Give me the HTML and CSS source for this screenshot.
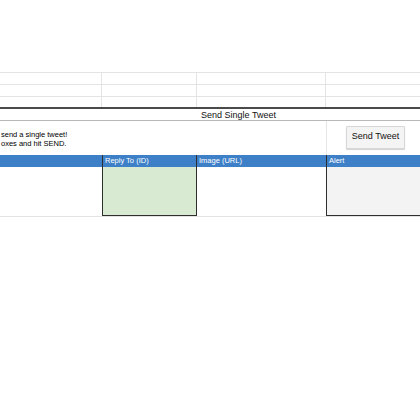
FILE: index.html
```html
<!DOCTYPE html>
<html>
<head>
<meta charset="utf-8">
<link rel="stylesheet" href="styles.css">
</head>
<body>
<div class="sheet">
  <div class="spacer"></div>
  <div class="gridrows">
    <div class="grow"><div class="c c1"></div><div class="c c2"></div><div class="c c3"></div><div class="c c4"></div></div>
    <div class="grow"><div class="c c1"></div><div class="c c2"></div><div class="c c3"></div><div class="c c4"></div></div>
    <div class="grow last"><div class="c c1"></div><div class="c c2"></div><div class="c c3"></div><div class="c c4"></div></div>
  </div>
  <div class="title">Send Single Tweet</div>
  <div class="info">
    <div class="info-text">
      <div>send a single tweet!</div>
      <div>oxes and hit SEND.</div>
    </div>
    <div class="info-action">
      <button class="send-btn">Send Tweet</button>
    </div>
  </div>
  <div class="fields">
    <div class="col col1"><div class="head"></div><div class="body"></div></div>
    <div class="col col2 box green"><div class="head">Reply To (ID)</div><div class="body"></div></div>
    <div class="col col3"><div class="head">Image (URL)</div><div class="body"></div></div>
    <div class="col col4 box grey"><div class="head">Alert</div><div class="body"></div></div>
  </div>
</div>
</body>
</html>
```
FILE: styles.css
```css
html, body {
  margin: 0;
  padding: 0;
  background: #ffffff;
}
body {
  font-family: "Liberation Sans", Arial, sans-serif;
  color: #111111;
  width: 420px;
  overflow: hidden;
}
.sheet {
  width: 420px;
}
.spacer {
  height: 72px;
}
.gridrows {
  border-top: 1px solid #e4e4e4;
}
.grow {
  display: flex;
  height: 11px;
  border-bottom: 1px solid #e4e4e4;
}
.grow.last {
  height: 10px;
  border-bottom: 2px solid #4a4a4a;
}
.c {
  box-sizing: border-box;
  height: 100%;
}
.c1 { width: 102px; border-right: 1px solid #e4e4e4; }
.c2 { width: 95px; border-right: 1px solid #e4e4e4; }
.c3 { width: 129px; border-right: 1px solid #e4e4e4; }
.c4 { flex: 1; }

.title {
  height: 10px;
  padding-top: 1px;
  line-height: 11px;
  font-size: 9px;
  padding-left: 201px;
  border-bottom: 1px solid #b8b8b8;
  color: #111111;
  white-space: nowrap;
}
.info {
  display: flex;
  height: 34px;
}
.info-text {
  box-sizing: border-box;
  width: 327px;
  border-right: 1px solid #e6e6e6;
  padding-top: 9px;
  padding-left: 1px;
  font-size: 7.5px;
  line-height: 9px;
  color: #000000;
  white-space: nowrap;
}
.info-action {
  padding-left: 19px;
  padding-top: 4px;
}
.send-btn {
  box-sizing: border-box;
  width: 59px;
  height: 23px;
  padding: 0 0 2px 0;
  margin: 0;
  font-family: "Liberation Sans", Arial, sans-serif;
  font-size: 9px;
  color: #111111;
  background: #f4f4f4;
  border: 1px solid #d6d6d6;
  border-radius: 1px;
  box-shadow: 0 1px 1px rgba(0, 0, 0, 0.18);
}
.fields {
  display: flex;
  border-bottom: 1px solid #e2e2e2;
}
.col {
  box-sizing: border-box;
}
.col1 { width: 102px; }
.col2 { width: 95px; }
.col3 { width: 129px; }
.col4 { flex: 1; margin-right: -2px; }
.head {
  height: 12px;
  line-height: 12px;
  background: #3d80c8;
  color: #ffffff;
  font-size: 7.5px;
  padding-left: 2px;
  white-space: nowrap;
}
.body {
  height: 49px;
}
.box {
  border: 1px solid #2f2f2f;
  border-top: none;
}
.box .body {
  height: 48px;
}
.green .body { background: #d9ead3; }
.grey .body { background: #f3f3f3; }
```
